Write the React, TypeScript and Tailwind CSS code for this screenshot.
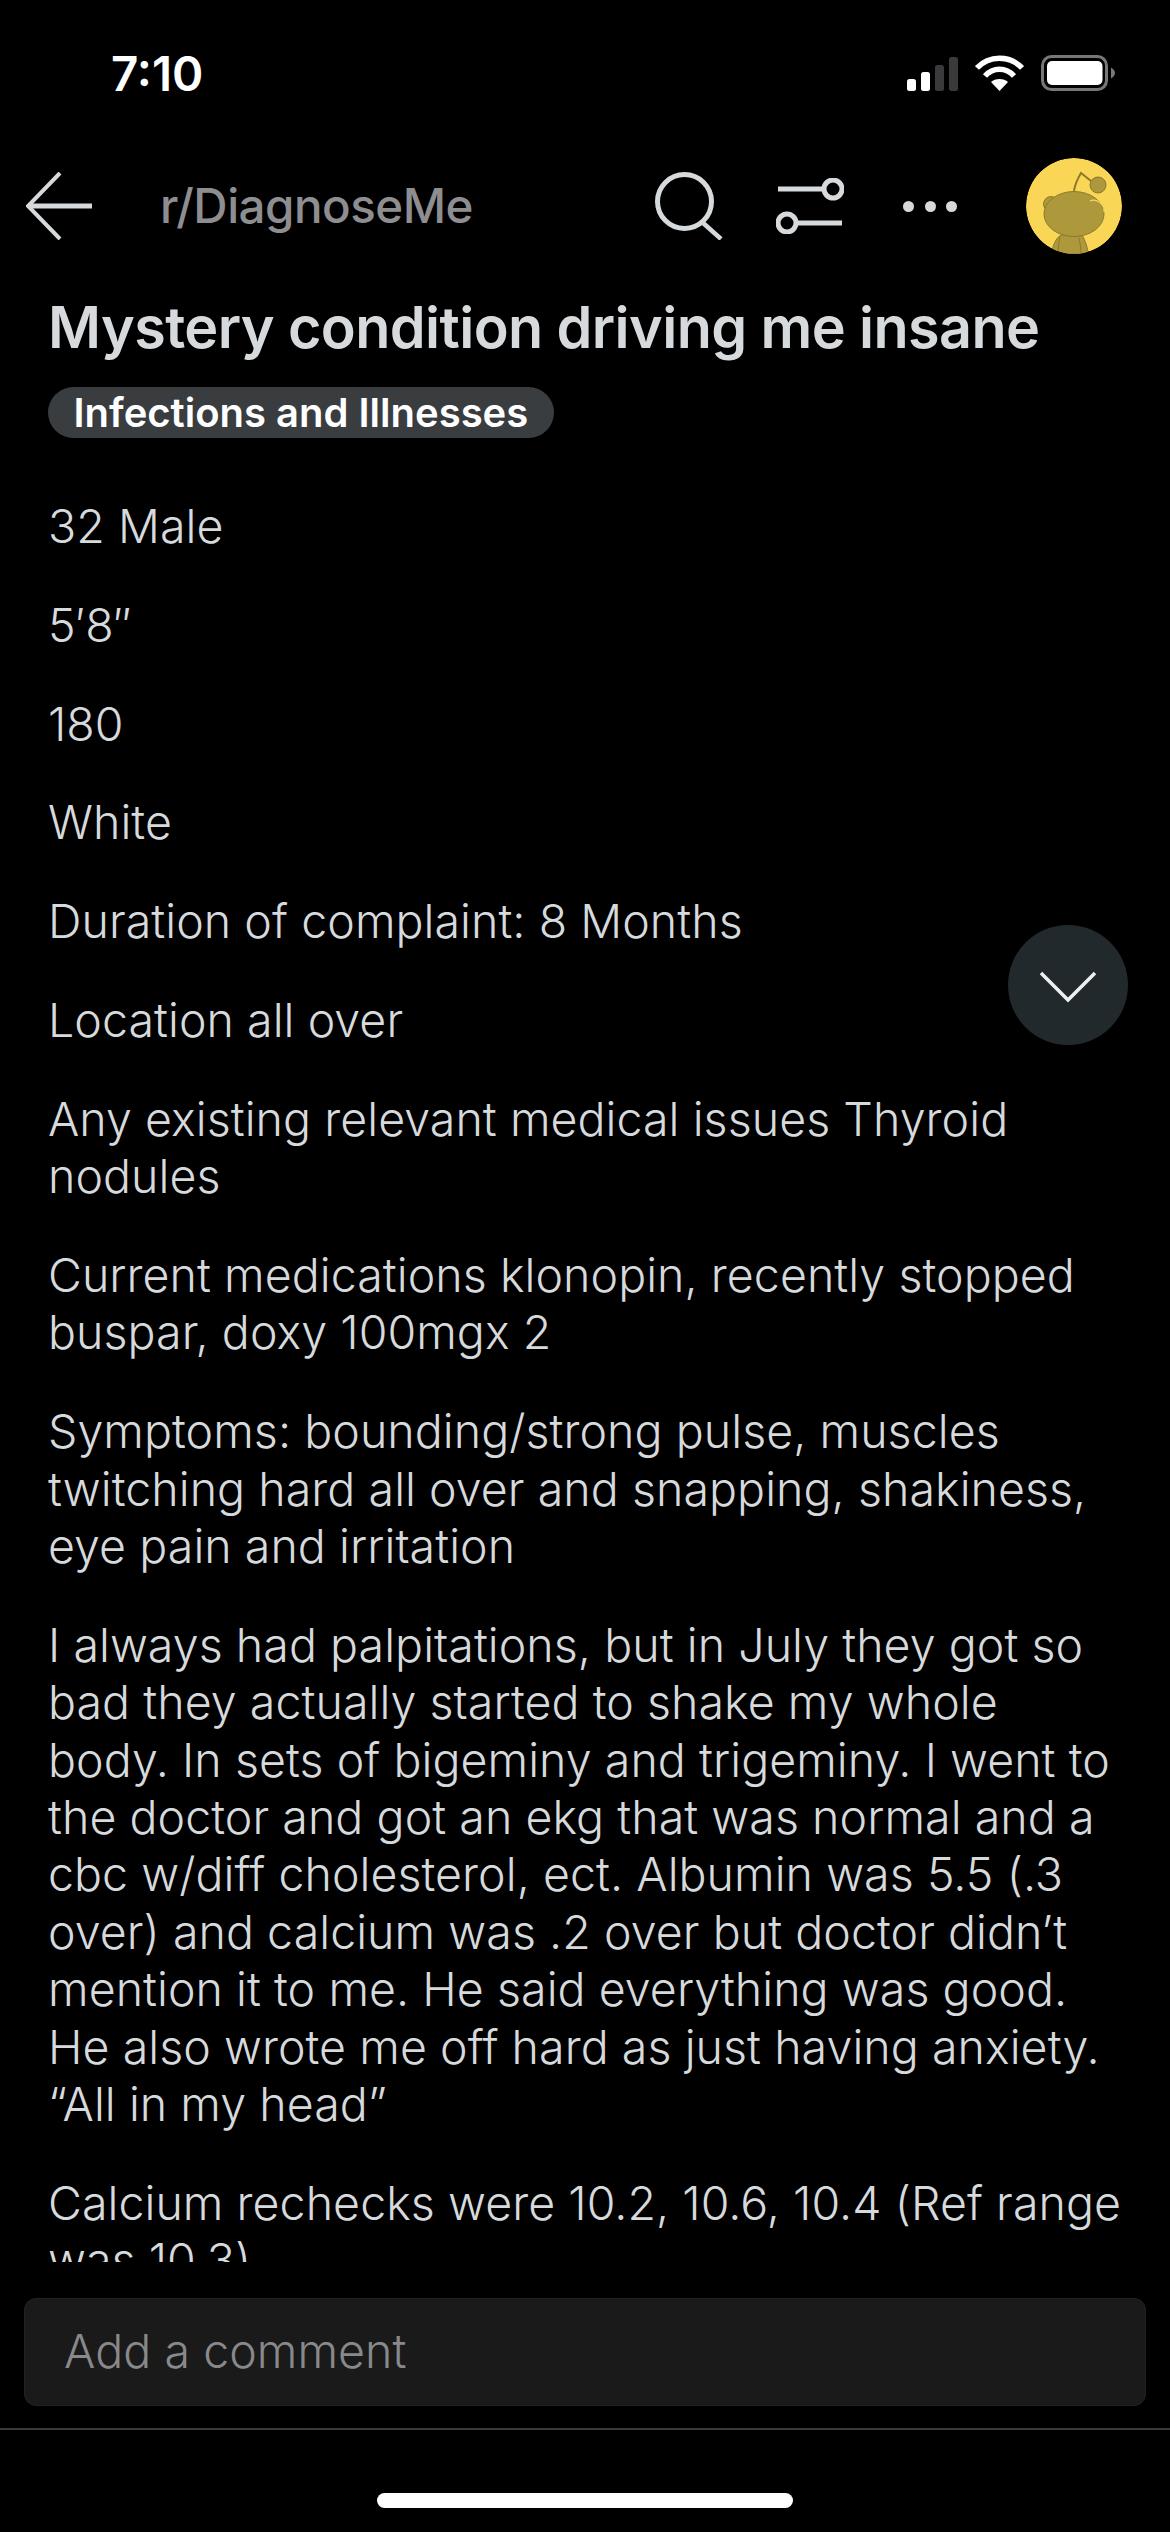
import React from "react";

const paragraphs: string[][] = [
  ["32 Male"],
  ["5′8″"],
  ["180"],
  ["White"],
  ["Duration of complaint: 8 Months"],
  ["Location all over"],
  ["Any existing relevant medical issues Thyroid", "nodules"],
  ["Current medications klonopin, recently stopped", "buspar, doxy 100mgx 2"],
  ["Symptoms: bounding/strong pulse, muscles", "twitching hard all over and snapping, shakiness,", "eye pain and irritation"],
  [
    "I always had palpitations, but in July they got so",
    "bad they actually started to shake my whole",
    "body. In sets of bigeminy and trigeminy. I went to",
    "the doctor and got an ekg that was normal and a",
    "cbc w/diff cholesterol, ect. Albumin was 5.5 (.3",
    "over) and calcium was .2 over but doctor didn’t",
    "mention it to me. He said everything was good.",
    "He also wrote me off hard as just having anxiety.",
    "“All in my head”",
  ],
  ["Calcium rechecks were 10.2, 10.6, 10.4 (Ref range", "was 10.3)"],
];

function StatusIcons() {
  return (
    <div className="flex items-end">
      <svg width="51" height="34" viewBox="0 0 51 34">
        <rect x="0" y="22" width="9" height="12" rx="2.5" fill="#fff" />
        <rect x="14" y="15" width="9" height="19" rx="2.5" fill="#fff" />
        <rect x="28" y="8" width="9" height="26" rx="2.5" fill="#3a3a3c" />
        <rect x="42" y="0" width="9" height="34" rx="2.5" fill="#3a3a3c" />
      </svg>
      <svg width="49" height="36" viewBox="0 0 49 36" fill="none" stroke="#fff" strokeWidth="5.5" className="ml-[17px]">
        <path d="M2 13 C14 0 35 0 47 13" />
        <path d="M10 21 C18 12 31 12 39 21" />
        <path d="M24.5 36 L16 27 C20 23 29 23 33 27 Z" fill="#fff" stroke="none" />
      </svg>
      <svg width="74" height="36" viewBox="0 0 74 36" fill="none" className="ml-[17px]">
        <rect x="1.5" y="1.5" width="64" height="33" rx="9" stroke="#77777a" strokeWidth="3" />
        <rect x="6" y="6" width="55.5" height="24" rx="5" fill="#fff" />
        <path d="M70 12.5 C72.5 14 74 16 74 18 C74 20 72.5 22 70 23.5 Z" fill="#77777a" />
      </svg>
    </div>
  );
}

function Avatar() {
  return (
    <svg width="96" height="96" viewBox="0 0 96 96" className="rounded-full">
      <circle cx="48" cy="48" r="48" fill="#fad656" />
      <g fill="#ad983b" stroke="#8c7a2e" strokeWidth="1">
        <path d="M26 96 C26 88 30 80 35 77 L56 77 C59 82 62 90 62 96 Z" />
        <circle cx="25" cy="46" r="7.5" />
        <ellipse cx="48" cy="56" rx="30" ry="22.5" />
        <circle cx="72" cy="27" r="8" />
        <path d="M64 43 C70 40 79 46 78 54" fill="none" stroke="#fad656" strokeWidth="1.2" />
      </g>
      <path d="M48 33 C49 26 52 20 55 15 L65 23" fill="none" stroke="#8c7a2e" strokeWidth="2" />
      <path d="M34 78 C33 84 32 90 32 96 M53 80 C54 85 55 90 55 96" fill="none" stroke="#8c7a2e" strokeWidth="1" />
    </svg>
  );
}

export default function App() {
  return (
    <div className="relative flex h-[2532px] w-[1170px] flex-col overflow-hidden bg-black font-['Inter','Liberation_Sans',sans-serif] text-[#d7dadc]">
      {/* status bar */}
      <div className="flex h-[150px] shrink-0 items-start justify-between pl-[111px] pr-[55px] pt-[46px]">
        <span className="text-[47.5px] leading-[56px] font-semibold text-white">7:10</span>
        <div className="pt-[9px]">
          <StatusIcons />
        </div>
      </div>

      {/* nav */}
      <div className="flex h-[112px] shrink-0 items-center pl-[26px] pr-[48px]">
        <svg width="66" height="68" viewBox="0 0 66 68" fill="none" stroke="#d7dadc" strokeWidth="4">
          <path d="M34 1 L2 34 L34 67" />
          <path d="M2 34 H66" strokeWidth="5" />
        </svg>
        <span className="ml-[68px] text-[47.5px] font-medium tracking-[-0.5px] text-[#8e8e90]">r/DiagnoseMe</span>
        <div className="ml-auto flex items-center">
          <svg width="68" height="68" viewBox="0 0 68 68" fill="none" stroke="#d7dadc" strokeWidth="5">
            <circle cx="29.5" cy="29.5" r="27" />
            <path d="M47 50 L66 67" strokeWidth="4.5" />
          </svg>
          <svg width="68" height="56" viewBox="0 0 68 56" fill="none" stroke="#d7dadc" strokeWidth="5" className="ml-[53px]">
            <path d="M2 11 H46" />
            <circle cx="57" cy="11" r="9" />
            <path d="M22 45 H66" />
            <circle cx="11" cy="45" r="9" />
          </svg>
          <div className="ml-[59px] flex items-center gap-[10.5px]">
            <span className="h-[11px] w-[11px] rounded-full bg-[#d7dadc]" />
            <span className="h-[11px] w-[11px] rounded-full bg-[#d7dadc]" />
            <span className="h-[11px] w-[11px] rounded-full bg-[#d7dadc]" />
          </div>
          <div className="ml-[69px]">
            <Avatar />
          </div>
        </div>
      </div>

      {/* content */}
      <div className="relative min-h-0 flex-1 overflow-hidden pl-[48px]">
        <h1 className="mt-[30px] text-[57.5px] leading-[70px] font-semibold tracking-[-0.6px] whitespace-nowrap text-[#d7dadc]">
          Mystery condition driving me insane
        </h1>
        <div className="mt-[25px] inline-flex h-[51px] items-center rounded-full bg-[#3a3d40] px-[25.5px] text-[40px] font-semibold whitespace-nowrap text-white">
          Infections and Illnesses
        </div>
        <div className="mt-[60px] flex flex-col gap-[41.4px] text-[46.5px] leading-[57.4px] font-[350] tracking-[0.06px] whitespace-nowrap">
          {paragraphs.map((lines, i) => (
            <p key={i}>
              {lines.map((l, j) => (
                <span key={j} className="block">
                  {l}
                </span>
              ))}
            </p>
          ))}
        </div>
      </div>

      {/* comment bar */}
      <div className="shrink-0 px-[24px] pt-[36px] pb-[22px]">
        <div className="flex h-[108px] items-center rounded-[12px] border border-[#222222] bg-[#1a1a1a] pl-[39px] text-[46.5px] font-[350] tracking-[0.06px] text-[#88898b]">
          Add a comment
        </div>
      </div>
      <div className="h-[2px] shrink-0 bg-[#3a3a3c]" />
      <div className="flex h-[102px] shrink-0 items-end justify-center pb-[24px]">
        <div className="h-[15px] w-[416px] rounded-full bg-white" />
      </div>

      {/* floating */}
      <div className="absolute top-[925px] left-[1008px] flex h-[120px] w-[120px] items-center justify-center rounded-full bg-[#21292d]">
        <svg width="58" height="32" viewBox="0 0 58 32" fill="none" stroke="#eeeeee" strokeWidth="3.5" className="mt-[4px]">
          <path d="M2 2 L29 29 L56 2" />
        </svg>
      </div>
    </div>
  );
}
